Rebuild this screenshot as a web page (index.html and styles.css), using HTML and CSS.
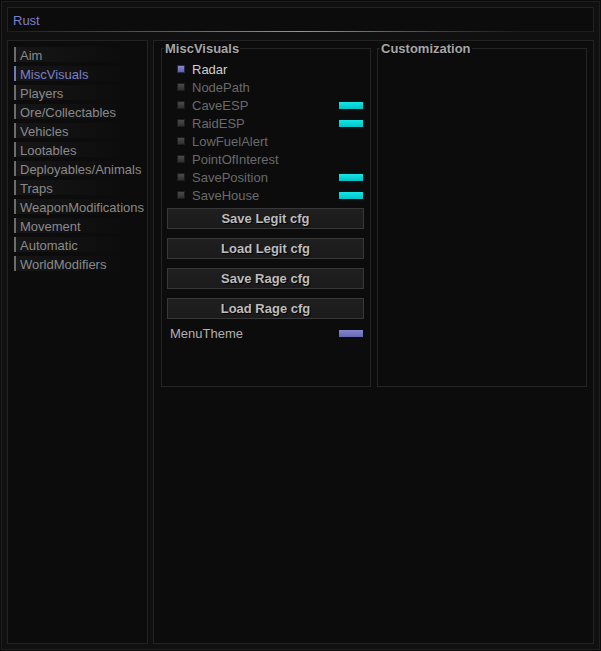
FILE: index.html
```html
<!DOCTYPE html>
<html>
<head>
<meta charset="utf-8">
<link rel="stylesheet" href="styles.css">
</head>
<body>
<div class="window">
  <div class="titlebar"><span class="title">Rust</span></div>
  <div class="content">
    <nav class="tabs">
      <div class="tab">Aim</div>
      <div class="tab active">MiscVisuals</div>
      <div class="tab">Players</div>
      <div class="tab">Ore/Collectables</div>
      <div class="tab">Vehicles</div>
      <div class="tab">Lootables</div>
      <div class="tab">Deployables/Animals</div>
      <div class="tab">Traps</div>
      <div class="tab">WeaponModifications</div>
      <div class="tab">Movement</div>
      <div class="tab">Automatic</div>
      <div class="tab">WorldModifiers</div>
    </nav>
    <main class="main">
      <fieldset class="group">
        <legend>MiscVisuals</legend>
        <div class="options">
          <div class="opt on"><span class="check"></span><span class="label">Radar</span></div>
          <div class="opt"><span class="check"></span><span class="label">NodePath</span></div>
          <div class="opt"><span class="check"></span><span class="label">CaveESP</span><span class="swatch cyan"></span></div>
          <div class="opt"><span class="check"></span><span class="label">RaidESP</span><span class="swatch cyan"></span></div>
          <div class="opt"><span class="check"></span><span class="label">LowFuelAlert</span></div>
          <div class="opt"><span class="check"></span><span class="label">PointOfInterest</span></div>
          <div class="opt"><span class="check"></span><span class="label">SavePosition</span><span class="swatch cyan"></span></div>
          <div class="opt"><span class="check"></span><span class="label">SaveHouse</span><span class="swatch cyan"></span></div>
        </div>
        <button class="btn first">Save Legit cfg</button>
        <button class="btn">Load Legit cfg</button>
        <button class="btn">Save Rage cfg</button>
        <button class="btn">Load Rage cfg</button>
        <div class="theme"><span class="theme-label">MenuTheme</span><span class="swatch purple"></span></div>
      </fieldset>
      <fieldset class="group">
        <legend>Customization</legend>
      </fieldset>
    </main>
  </div>
</div>
</body>
</html>
```
FILE: styles.css
```css
html, body {
  margin: 0;
  padding: 0;
  background: #0b0b0b;
}
body {
  width: 601px;
  height: 651px;
  overflow: hidden;
  font-family: "Liberation Sans", Arial, sans-serif;
  font-size: 13px;
}
.window {
  box-sizing: border-box;
  margin: 1px;
  width: 599px;
  height: 649px;
  border: 1px solid #1f1f1f;
  background: #101010;
  padding: 5px;
  display: flex;
  flex-direction: column;
  gap: 8px;
}
.titlebar {
  box-sizing: border-box;
  height: 25px;
  border: 1px solid #222;
  border-bottom: none;
  background:
    linear-gradient(to right, #1c1c1c 0%, #5a5d88 30%, #8a8ed2 50%, #3a3b50 75%, #1c1c1c 88%) left bottom / 100% 1px no-repeat,
    #0c0c0c;
  display: flex;
  align-items: center;
  padding: 1px 0 0 5px;
}
.title {
  color: #7b80c8;
  font-size: 13px;
}
.content {
  flex: 1;
  display: flex;
  gap: 5px;
  min-height: 0;
}
.tabs {
  box-sizing: border-box;
  width: 141px;
  border: 1px solid #232323;
  background: #0c0c0c;
  padding: 6px 0 0 6px;
}
.tab {
  height: 14px;
  padding-top: 1px;
  line-height: 15px;
  margin-bottom: 4px;
  border-left: 2px solid #6c6c6c;
  padding-left: 4px;
  color: #8a8a8a;
  background: linear-gradient(to right, #161616, #0c0c0c 85%);
  white-space: nowrap;
}
.tab.active {
  border-left-color: #7478c0;
  color: #7b80c8;
}
.main {
  box-sizing: border-box;
  flex: 1;
  border: 1px solid #232323;
  background: #0c0c0c;
  padding: 0 6px 0 7px;
  display: flex;
  gap: 6px;
  align-items: flex-start;
}
.group {
  box-sizing: border-box;
  margin: 0;
  width: 210px;
  height: 346px;
  border: 1px solid #252525;
  padding: 0 5px;
  min-width: 0;
  display: flex;
  flex-direction: column;
}
.group legend {
  padding: 0 1px;
  margin-left: -3px;
  font-weight: bold;
  font-size: 13px;
  line-height: 15px;
  color: #a6a6a6;
  text-shadow: 1px 1px 0 #000;
}
.options {
  margin-top: 4px;
}
.opt {
  display: flex;
  align-items: center;
  height: 18px;
}
.check {
  box-sizing: border-box;
  width: 8px;
  height: 8px;
  margin-left: 10px;
  margin-right: 7px;
  border: 1px solid #1e1e1e;
  background: linear-gradient(#4a4a4a, #303030);
}
.label {
  color: #6a6a6a;
  line-height: 15px;
}
.opt.on .check {
  background: linear-gradient(#8488d2, #5e62ac);
  border-color: #2a2c48;
}
.opt.on .label {
  color: #cfcfcf;
}
.swatch {
  margin-left: auto;
  margin-right: 2px;
  width: 24px;
  height: 7px;
}
.swatch.cyan {
  background: linear-gradient(#14e6e6, #00c2c8);
}
.swatch.purple {
  background: linear-gradient(#8286cc, #6469b2);
}
.btn {
  box-sizing: border-box;
  display: block;
  width: 197px;
  height: 21px;
  margin: 9px 0 0 0;
  padding: 0;
  border: 1px solid #383838;
  background: linear-gradient(#1f1f1f, #1b1b1b);
  font-family: "Liberation Sans", Arial, sans-serif;
  font-weight: bold;
  font-size: 13px;
  color: #bdbdbd;
  text-shadow: 1px 1px 0 #000;
  line-height: 19px;
}
.btn.first {
  margin-top: 4px;
}
.theme {
  display: flex;
  align-items: center;
  height: 18px;
  margin-top: 5px;
  padding-left: 3px;
}
.theme-label {
  color: #b0b0b0;
}
```
